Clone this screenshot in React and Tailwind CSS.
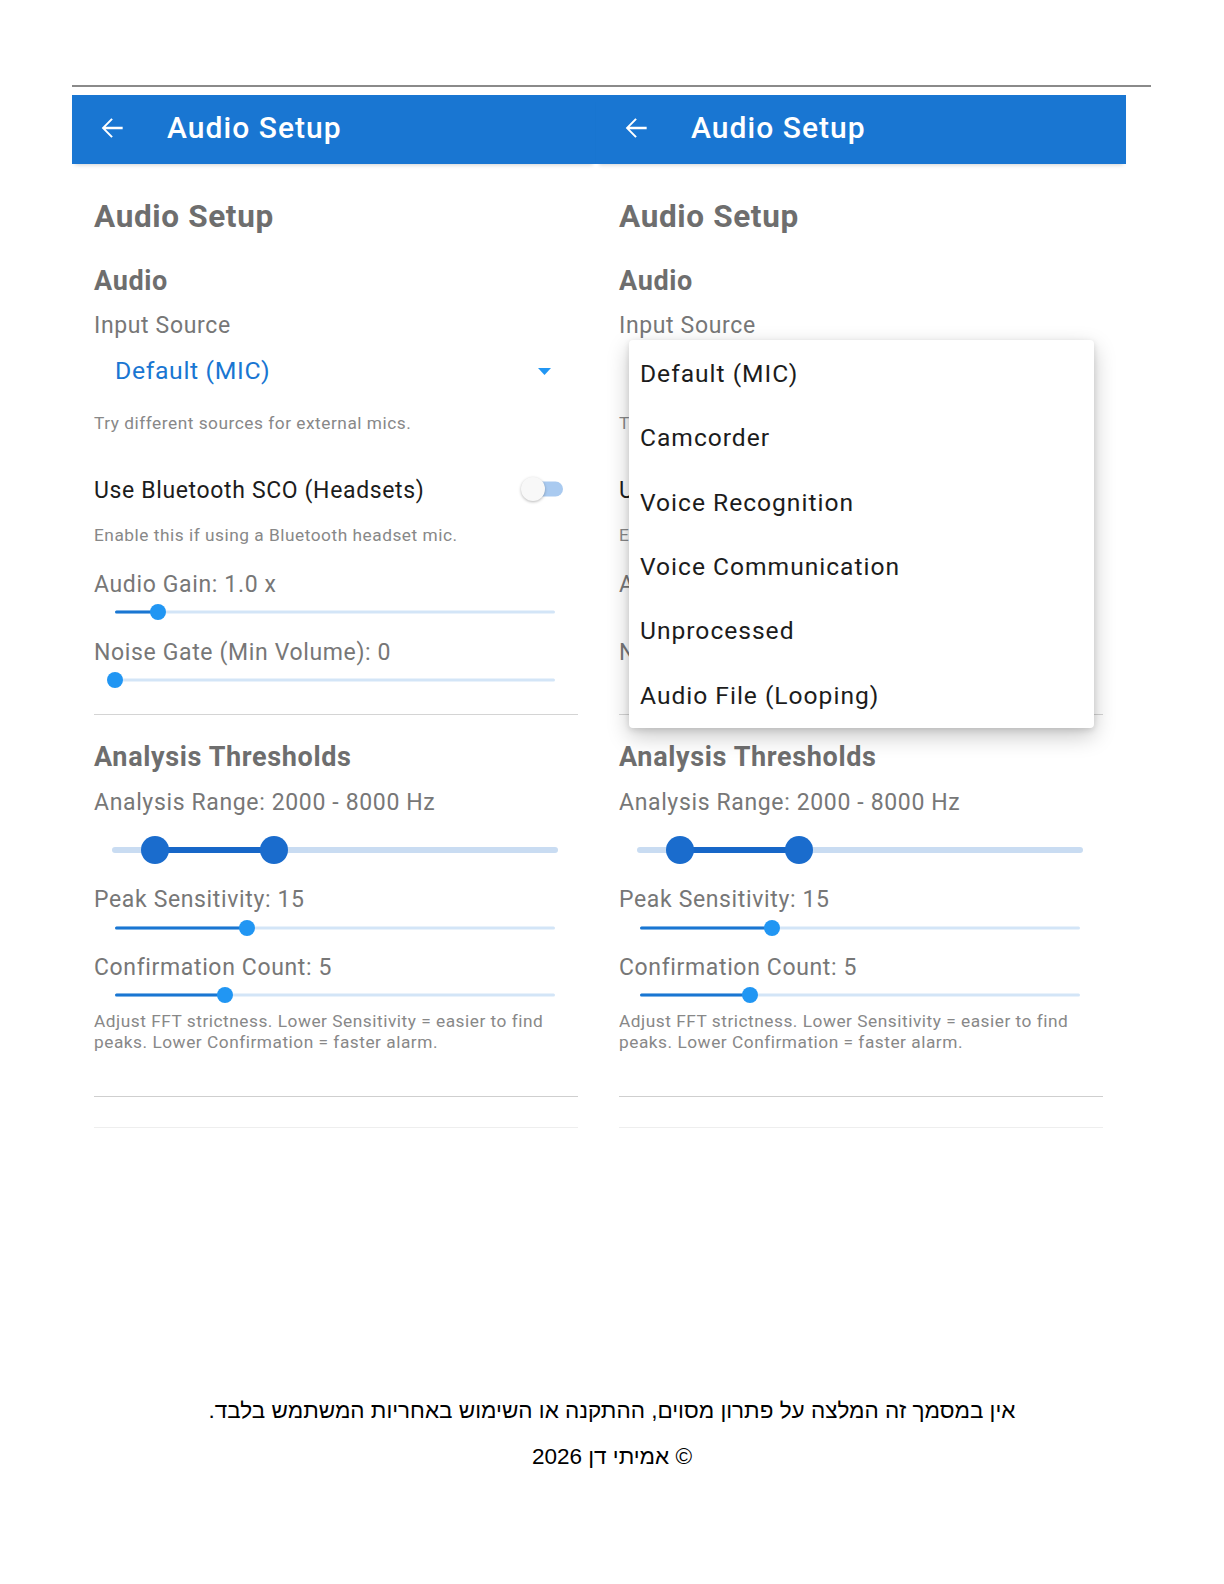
import React from "react";

const ROBOTO = "font-[family-name:Roboto,'Noto_Sans',sans-serif]";

function BackArrow() {
  return (
    <svg width="32" height="32" viewBox="0 0 24 24" fill="white" aria-hidden="true">
      <path d="M20 11.1H7.2l5.4-5.4-1.1-1.1L4.3 12l7.2 7.4 1.1-1.1-5.4-5.4H20z" />
    </svg>
  );
}

function Header() {
  return (
    <div className="relative z-10 flex h-[69px] items-center bg-[#1976d2] pb-[4px] pl-[24px] shadow-[0_4px_4px_-3px_rgba(0,0,0,0.18)]">
      <BackArrow />
      <span className="ml-[39px] text-[30px] font-medium leading-none tracking-[0.035em] text-white">
        Audio Setup
      </span>
    </div>
  );
}

// Single-value slider; track is 440px wide, value is the thumb offset in px
function Slider({ value, className }) {
  return (
    <div className={`relative ml-[21px] h-[20px] w-[440px] ${className}`}>
      <div className="absolute inset-x-0 top-1/2 h-[3px] -translate-y-1/2 rounded-full bg-[#d3e5f7]" />
      <div
        className="absolute left-0 top-1/2 h-[3px] -translate-y-1/2 rounded-full bg-[#1976d2]"
        style={{ width: value }}
      />
      <div
        className="absolute top-1/2 size-[16px] -translate-x-1/2 -translate-y-1/2 rounded-full bg-[#2196f3]"
        style={{ left: value }}
      />
    </div>
  );
}

function RangeSlider({ from, to, className }) {
  return (
    <div className={`relative ml-[18px] h-[30px] w-[446px] ${className}`}>
      <div className="absolute inset-x-0 top-1/2 h-[6px] -translate-y-1/2 rounded-full bg-[#c9dcf2]" />
      <div
        className="absolute top-1/2 h-[6px] -translate-y-1/2 bg-[#1767c8]"
        style={{ left: from, width: to - from }}
      />
      <div
        className="absolute top-1/2 size-[28px] -translate-x-1/2 -translate-y-1/2 rounded-full bg-[#1a6ccd]"
        style={{ left: from }}
      />
      <div
        className="absolute top-1/2 size-[28px] -translate-x-1/2 -translate-y-1/2 rounded-full bg-[#1a6ccd]"
        style={{ left: to }}
      />
    </div>
  );
}

function Toggle() {
  return (
    <div className="relative mr-[15px] mt-[-3px] h-[24px] w-[42px]">
      <div className="absolute right-0 top-1/2 h-[15px] w-[34px] -translate-y-1/2 rounded-full bg-[#a9caf0]" />
      <div className="absolute left-0 top-0 size-[24px] rounded-full bg-[#f8f8f8] shadow-[0_1px_3px_rgba(0,0,0,0.28)]" />
    </div>
  );
}

function SettingsBody() {
  return (
    <div className="ml-[22px] w-[484px] tracking-[0.04em]">
      <div className="mt-[35px] h-[36px] text-[31.5px] font-bold leading-[36px] text-[#6e6e6e]">Audio Setup</div>
      <div className="mt-[29.5px] h-[32px] text-[27px] font-bold leading-[32px] text-[#6e6e6e]">Audio</div>
      <div className="mt-[15.5px] h-[28px] text-[23px] leading-[28px] text-[#777777]">Input Source</div>
      <div className="mt-[16px] flex h-[30px] items-center justify-between">
        <span className="ml-[21px] text-[24.8px] leading-[30px] text-[#1976d2]">Default (MIC)</span>
        <svg width="13" height="7" viewBox="0 0 13 7" className="mr-[27px]" aria-hidden="true">
          <path d="M0 0h13L6.5 7z" fill="#2196f3" />
        </svg>
      </div>
      <div className="mt-[25.5px] h-[22px] text-[17.3px] leading-[22px] tracking-[0.03em] text-[#888888]">
        Try different sources for external mics.
      </div>
      <div className="mt-[42px] flex h-[30px] items-center justify-between">
        <span className="text-[23px] leading-[30px] text-[#1c1c1c]">Use Bluetooth SCO (Headsets)</span>
        <Toggle />
      </div>
      <div className="mt-[18px] h-[22px] text-[17.3px] leading-[22px] tracking-[0.03em] text-[#888888]">
        Enable this if using a Bluetooth headset mic.
      </div>
      <div className="mt-[25.5px] h-[28px] text-[23px] leading-[28px] text-[#777777]">Audio Gain: 1.0 x</div>
      <Slider value={43} className="mt-[3px]" />
      <div className="mt-[16.5px] h-[28px] text-[23px] leading-[28px] text-[#777777]">Noise Gate (Min Volume): 0</div>
      <Slider value={0} className="mt-[3.5px]" />
      <div className="mt-[23.5px] h-[1.5px] bg-[#d4d4d4]" />
      <div className="mt-[26px] h-[32px] text-[27px] font-bold leading-[32px] text-[#6e6e6e]">Analysis Thresholds</div>
      <div className="mt-[16px] h-[28px] text-[23px] leading-[28px] text-[#777777]">Analysis Range: 2000 - 8000 Hz</div>
      <RangeSlider from={43} to={162} className="mt-[18px]" />
      <div className="mt-[20.5px] h-[28px] text-[23px] leading-[28px] text-[#777777]">Peak Sensitivity: 15</div>
      <Slider value={132} className="mt-[4.5px]" />
      <div className="mt-[16px] h-[28px] text-[23px] leading-[28px] text-[#777777]">Confirmation Count: 5</div>
      <Slider value={110} className="mt-[3px]" />
      <div className="mt-[5.5px] text-[17.3px] leading-[21px] tracking-[0.03em] text-[#888888]">
        Adjust FFT strictness. Lower Sensitivity = easier to find
        <br />
        peaks. Lower Confirmation = faster alarm.
      </div>
      <div className="mt-[43px] h-[1.5px] bg-[#cfcfcf]" />
      <div className="mt-[30px] h-px bg-[#eeeeee]" />
    </div>
  );
}

const SOURCES = [
  "Default (MIC)",
  "Camcorder",
  "Voice Recognition",
  "Voice Communication",
  "Unprocessed",
  "Audio File (Looping)",
];

function SourceMenu() {
  return (
    <div className="absolute left-[33px] top-[245px] z-20 w-[465px] rounded-[4px] bg-white pt-[2px] shadow-[0_8px_22px_rgba(0,0,0,0.22),0_2px_6px_rgba(0,0,0,0.12)]">
      {SOURCES.map((s) => (
        <div
          key={s}
          className="flex h-[64.4px] items-center pl-[11px] text-[24.6px] tracking-[0.04em] text-[#1c1c1c]"
        >
          {s}
        </div>
      ))}
    </div>
  );
}

export default function App() {
  return (
    <div className={`relative h-[1584px] w-[1224px] overflow-hidden bg-white ${ROBOTO}`}>
      <div className="pl-[72px] pt-[85px]">
        <div className="h-[2px] w-[1079px] bg-[#8a8a8a]" />
        <div className="mt-[8px] flex">
          <section className="w-[524px]">
            <Header />
            <SettingsBody />
          </section>
          <section className="relative w-[530px]">
            <Header />
            <div className="pl-px">
              <SettingsBody />
            </div>
            <SourceMenu />
          </section>
        </div>
      </div>
      <div
        dir="rtl"
        className="mt-[268px] text-center font-[family-name:'Liberation_Sans',Arial,sans-serif] text-[22.5px] leading-[30px] text-black"
      >
        <p>אין במסמך זה המלצה על פתרון מסוים, ההתקנה או השימוש באחריות המשתמש בלבד.</p>
        <p className="mt-[16px]">© אמיתי דן 2026</p>
      </div>
    </div>
  );
}
